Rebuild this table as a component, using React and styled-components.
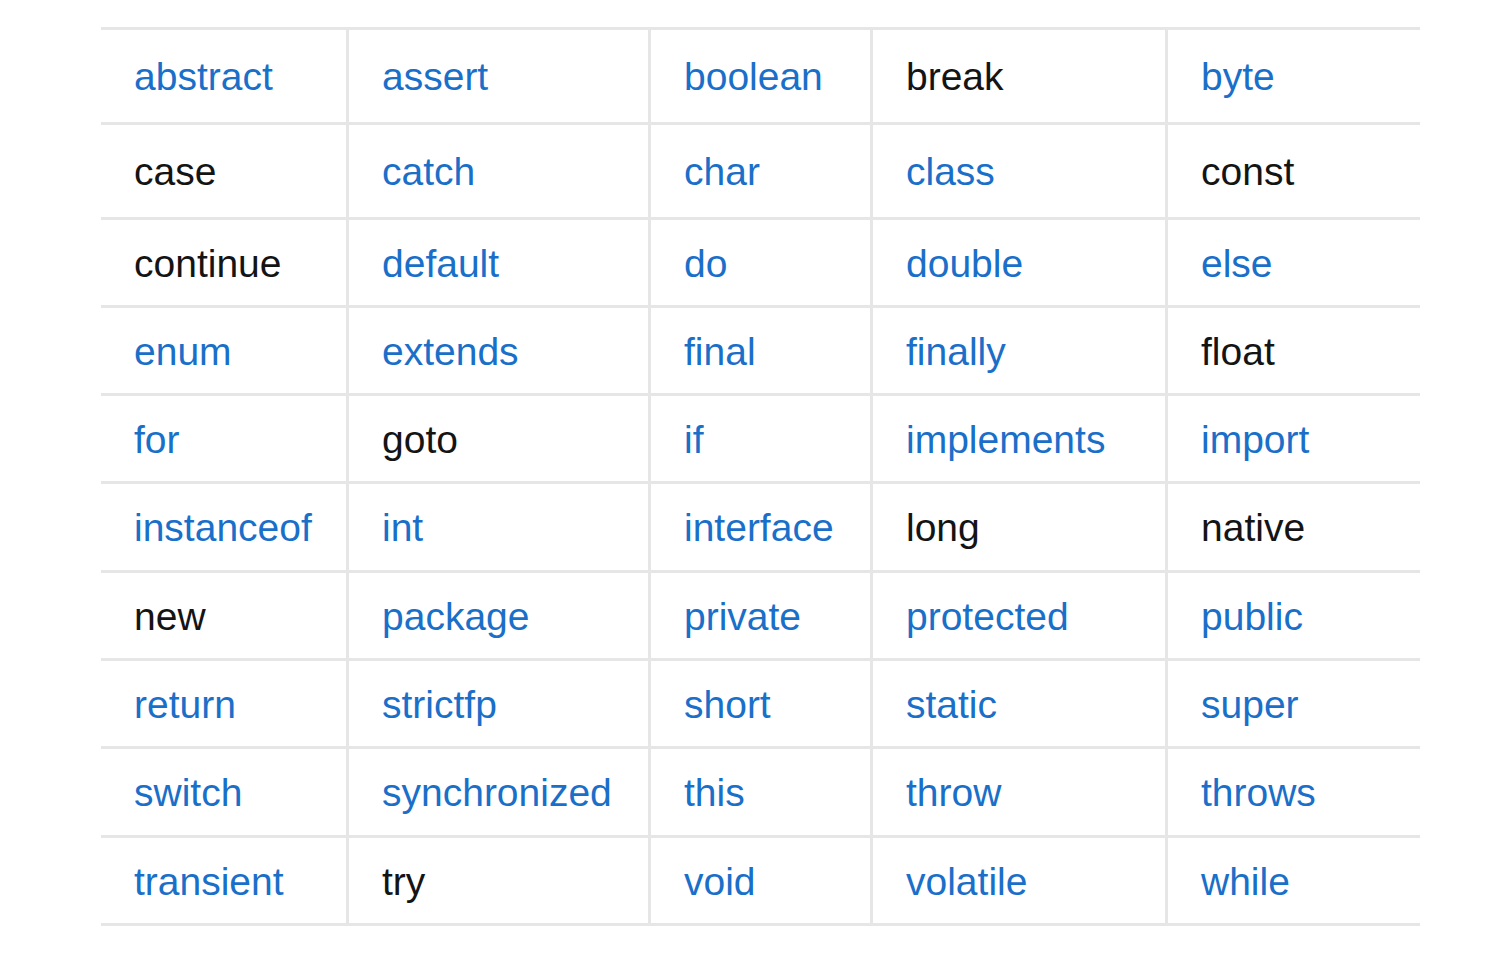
import React from 'react';
import styled, { createGlobalStyle } from 'styled-components';

const GlobalStyle = createGlobalStyle`
  html, body {
    margin: 0;
    padding: 0;
    background: #ffffff;
  }
  body {
    font-family: "Liberation Sans", Arial, sans-serif;
  }
`;

const Page = styled.div`
  width: 1486px;
  height: 958px;
  padding: 27px 0 0 101px;
  box-sizing: border-box;
  background: #fff;
`;

const Table = styled.div`
  width: 1319px;
  border-top: 3px solid #e6e6e6;
`;

const Row = styled.div`
  display: grid;
  grid-template-columns: 245px 302px 222px 295px 255px;
  height: ${props => props.h}px;
  box-sizing: border-box;
  border-bottom: 3px solid #e6e6e6;
`;

const Cell = styled.div`
  display: flex;
  align-items: center;
  padding: 2px 0 0 33px;
  border-left: ${props => (props.first ? 'none' : '3px solid #e6e6e6')};
  font-size: 39px;
  line-height: 44px;
  color: ${props => (props.plain ? '#141414' : '#1a6fc9')};
  white-space: nowrap;
`;

// keywords that show as plain text (no link)
const plain = new Set(['break', 'case', 'const', 'continue', 'float', 'goto', 'long', 'native', 'new', 'try']);

const rows = [
  ['abstract', 'assert', 'boolean', 'break', 'byte'],
  ['case', 'catch', 'char', 'class', 'const'],
  ['continue', 'default', 'do', 'double', 'else'],
  ['enum', 'extends', 'final', 'finally', 'float'],
  ['for', 'goto', 'if', 'implements', 'import'],
  ['instanceof', 'int', 'interface', 'long', 'native'],
  ['new', 'package', 'private', 'protected', 'public'],
  ['return', 'strictfp', 'short', 'static', 'super'],
  ['switch', 'synchronized', 'this', 'throw', 'throws'],
  ['transient', 'try', 'void', 'volatile', 'while'],
];

const heights = [95, 95, 88, 88, 88, 89, 88, 88, 89, 88];

export default function App() {
  return (
    <>
      <GlobalStyle />
      <Page>
        <Table>
          {rows.map((row, i) => (
            <Row key={i} h={heights[i]}>
              {row.map((word, j) => (
                <Cell key={word} first={j === 0} plain={plain.has(word)}>
                  {word}
                </Cell>
              ))}
            </Row>
          ))}
        </Table>
      </Page>
    </>
  );
}
